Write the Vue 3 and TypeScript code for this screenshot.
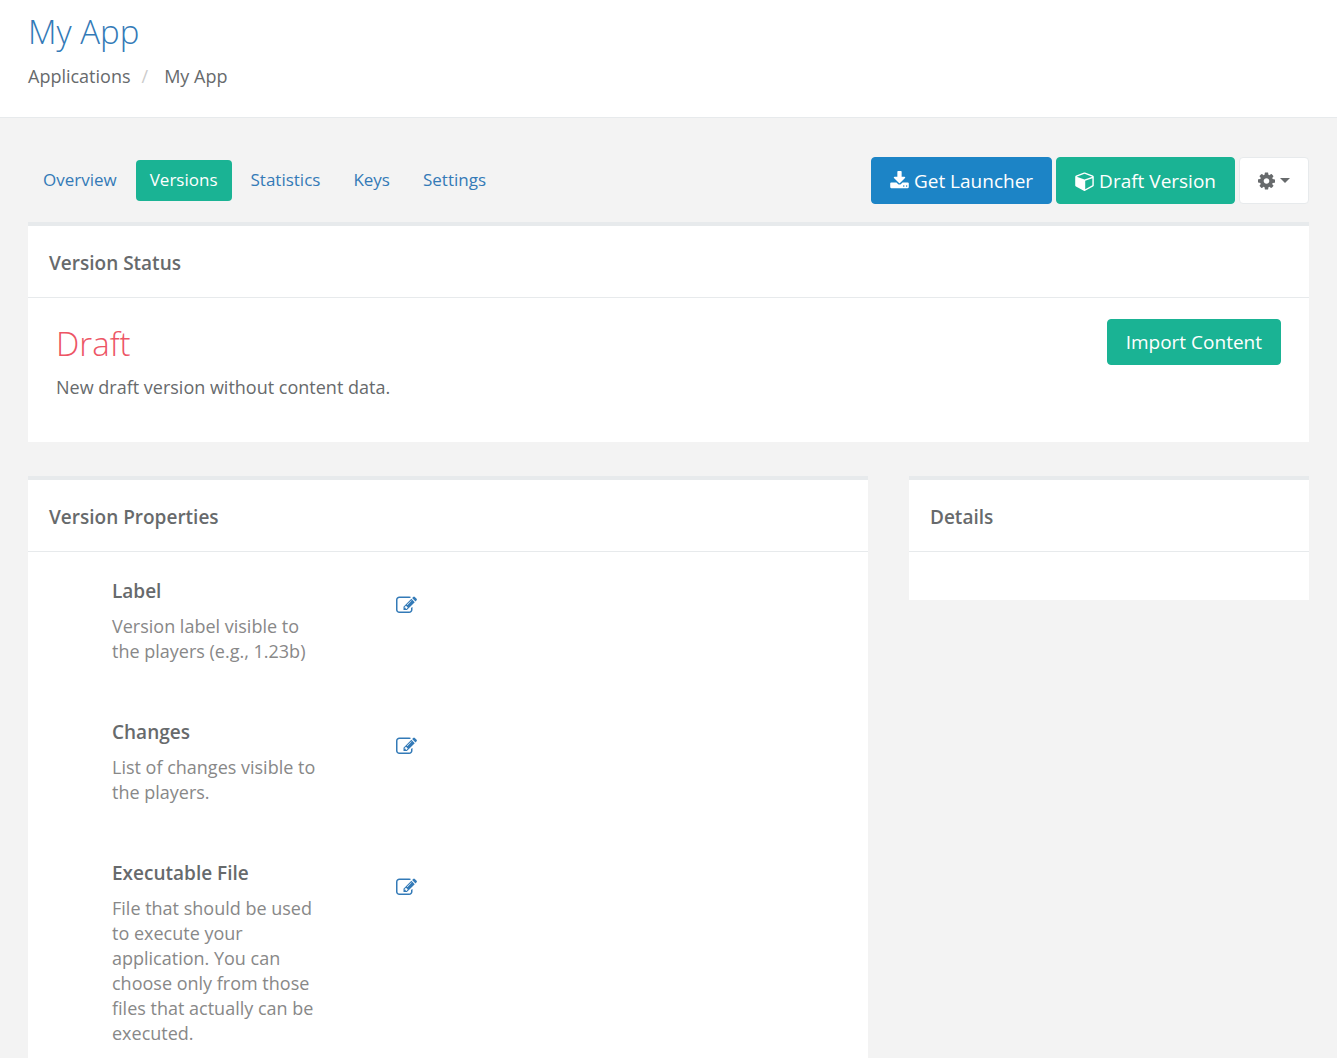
<script setup lang="ts">
interface Tab {
  label: string
  active?: boolean
}

interface Property {
  title: string
  description: string
}

const tabs: Tab[] = [
  { label: 'Overview' },
  { label: 'Versions', active: true },
  { label: 'Statistics' },
  { label: 'Keys' },
  { label: 'Settings' },
]

const properties: Property[] = [
  { title: 'Label', description: 'Version label visible to the players (e.g., 1.23b)' },
  { title: 'Changes', description: 'List of changes visible to the players.' },
  {
    title: 'Executable File',
    description:
      'File that should be used to execute your application. You can choose only from those files that actually can be executed.',
  },
]
</script>

<template>
  <div class="page">
    <header class="page-heading">
      <h2 class="title">My App</h2>
      <nav aria-label="Breadcrumb">
        <ol class="breadcrumb">
          <li><a href="#">Applications</a></li>
          <li><a href="#">My App</a></li>
        </ol>
      </nav>
    </header>

    <main class="content">
      <div class="toolbar">
        <nav class="tabs" aria-label="Application">
          <a v-for="tab in tabs" :key="tab.label" href="#" class="tab" :class="{ active: tab.active }">{{ tab.label }}</a>
        </nav>
        <div class="actions">
          <button type="button" class="btn btn-blue">
            <svg class="icon" viewBox="0 0 1664 1792" width="19" height="20" aria-hidden="true">
              <path d="M1280 1344q0-26-19-45t-45-19-45 19-19 45 19 45 45 19 45-19 19-45zm256 0q0-26-19-45t-45-19-45 19-19 45 19 45 45 19 45-19 19-45zm128-224v320q0 40-28 68t-68 28h-1472q-40 0-68-28t-28-68v-320q0-40 28-68t68-28h465l135 136q58 56 136 56t136-56l136-136h464q40 0 68 28t28 68zm-325-569q17 41-14 70l-448 448q-18 19-45 19t-45-19l-448-448q-31-29-14-70 17-39 59-39h256v-448q0-26 19-45t45-19h256q26 0 45 19t19 45v448h256q42 0 59 39z" />
            </svg>
            <span>Get Launcher</span>
          </button>
          <button type="button" class="btn btn-green">
            <svg class="icon" viewBox="0 0 1664 1792" width="19" height="20" aria-hidden="true">
              <path d="M896 1629l640-349v-636l-640 233v752zm-64-865l698-254-698-254-698 254zm832-252v768q0 35-18 65t-49 47l-704 384q-28 16-61 16t-61-16l-704-384q-31-17-49-47t-18-65v-768q0-40 23-73t61-47l704-256q22-8 44-8t44 8l704 256q38 14 61 47t23 73z" />
            </svg>
            <span>Draft Version</span>
          </button>
          <button type="button" class="btn btn-white" aria-label="Options">
            <svg class="icon" viewBox="128 0 1536 1792" width="17" height="20" aria-hidden="true">
              <path d="M1152 896q0-106-75-181t-181-75-181 75-75 181 75 181 181 75 181-75 75-181zm512-109v222q0 12-8 23t-20 13l-185 28q-19 54-39 91 35 50 107 138 10 12 10 25t-9 23q-27 37-99 108t-94 71q-12 0-26-9l-138-108q-44 23-91 38-16 136-29 186-7 28-36 28h-222q-14 0-24.5-8.5t-11.5-21.5l-28-184q-49-16-90-37l-141 107q-10 9-25 9-14 0-25-11-126-114-165-168-7-10-7-23 0-12 8-23 15-21 51-66.5t54-70.5q-27-50-41-99l-183-27q-13-2-21-12.5t-8-23.5v-222q0-12 8-23t19-13l186-28q14-46 39-92-40-57-107-138-10-12-10-24 0-10 9-23 26-36 98.5-107.5t94.5-71.5q13 0 26 10l138 107q44-23 91-38 16-136 29-186 7-28 36-28h222q14 0 24.5 8.5t11.5 21.5l28 184q49 16 90 37l142-107q9-9 24-9 13 0 25 10 129 119 165 170 7 8 7 22 0 12-8 23-15 21-51 66.5t-54 70.5q26 50 41 98l183 28q13 2 21 12.5t8 23.5z" />
            </svg>
            <span class="caret"></span>
          </button>
        </div>
      </div>

      <section class="panel">
        <h5 class="panel-title">Version Status</h5>
        <div class="status">
          <div>
            <h2 class="status-name">Draft</h2>
            <p class="status-text">New draft version without content data.</p>
          </div>
          <button type="button" class="btn btn-green">Import Content</button>
        </div>
      </section>

      <div class="columns">
        <section class="panel main-column">
          <h5 class="panel-title">Version Properties</h5>
          <div class="properties">
            <div v-for="property in properties" :key="property.title" class="property">
              <div>
                <h4 class="property-title">{{ property.title }}</h4>
                <p class="property-text">{{ property.description }}</p>
              </div>
              <a href="#" class="edit" :aria-label="`Edit ${property.title}`">
                <svg class="icon" viewBox="0 0 1792 1792" width="21" height="21" aria-hidden="true">
                  <path d="M888 1184l116-116-152-152-116 116v56h96v96h56zm440-720q-16-16-33 1l-350 350q-17 17-1 33t33-1l350-350q17-17 1-33zm80 594v190q0 119-84.5 203.5t-203.5 84.5h-832q-119 0-203.5-84.5t-84.5-203.5v-832q0-119 84.5-203.5t203.5-84.5h832q63 0 117 25 15 7 18 23 3 17-9 29l-49 49q-14 14-32 8-23-6-45-6h-832q-66 0-113 47t-47 113v832q0 66 47 113t113 47h832q66 0 113-47t47-113v-126q0-13 9-22l64-64q15-15 35-7t20 29zm-96-738l288 288-672 672h-288v-288zm444 132l-92 92-288-288 92-92q28-28 68-28t68 28l152 152q28 28 28 68t-28 68z" />
                </svg>
              </a>
            </div>
          </div>
        </section>
        <section class="panel side-column">
          <h5 class="panel-title">Details</h5>
          <div class="details"></div>
        </section>
      </div>
    </main>
  </div>
</template>

<style>
body {
  margin: 0;
  background: #f3f3f3;
}
</style>

<style scoped>
.page {
  color: #676a6c;
  font-family: "Open Sans", "Noto Sans", sans-serif;
  font-size: 18px;
  line-height: 26px;
}

h2,
h4,
h5,
p,
ol {
  margin: 0;
  padding: 0;
}

a {
  color: #337ab7;
  text-decoration: none;
}

.icon {
  display: block;
  flex: none;
  fill: currentColor;
}

.page-heading {
  padding: 12px 28px 28px;
  background: #fff;
  border-bottom: 1px solid #e7eaec;
}

.title {
  margin-bottom: 12px;
  color: #337ab7;
  font-size: 33px;
  font-weight: 300;
  line-height: 39px;
}

.breadcrumb {
  display: flex;
  list-style: none;
}

.breadcrumb a {
  color: inherit;
}

.breadcrumb li + li::before {
  content: "/";
  padding: 0 16px 0 11px;
  color: #ccc;
}

.content {
  padding: 39px 28px 56px;
}

.toolbar {
  display: flex;
  justify-content: space-between;
  align-items: center;
  margin-bottom: 18px;
}

.tabs {
  display: flex;
  gap: 5px;
  padding-left: 1px;
}

.tab {
  padding: 8px 14px 9px;
  border-radius: 4px;
  font-size: 17px;
  line-height: 24px;
}

.tab.active {
  color: #fff;
  background: #1ab394;
}

.actions {
  display: flex;
  gap: 4px;
  min-height: 47px;
}

.btn {
  display: flex;
  align-items: center;
  gap: 5px;
  min-height: 46px;
  padding: 0 18px;
  color: #fff;
  border: 1px solid;
  border-radius: 4px;
  font: inherit;
  font-size: 19px;
}

.btn-blue {
  background: #1c84c6;
  border-color: #1c84c6;
}

.btn-green {
  background: #1ab394;
  border-color: #1ab394;
}

.btn-white {
  color: #676a6c;
  background: #fff;
  border-color: #e7eaec;
}

.caret {
  border: 5px solid transparent;
  border-top-color: currentColor;
  border-bottom: 0;
}

.panel {
  background: #fff;
  border-top: 4px solid #e7eaec;
}

.panel-title {
  padding: 24px 21px 21px;
  border-bottom: 1px solid #e7eaec;
  font-size: 19px;
  font-weight: 600;
}

.status {
  display: flex;
  justify-content: space-between;
  align-items: flex-start;
  padding: 21px 28px 42px;
}

.status-name {
  margin-top: 5px;
  margin-bottom: 11px;
  color: #ed5565;
  font-size: 33px;
  font-weight: 300;
  line-height: 39px;
}

.columns {
  display: flex;
  align-items: flex-start;
  gap: 41px;
  margin-top: 34px;
}

.main-column {
  flex: 21 1 0;
}

.side-column {
  flex: 10 1 0;
}

.properties {
  padding: 26px 84px 0;
}

.property {
  display: grid;
  grid-template-columns: 212px 1fr;
  column-gap: 72px;
  align-items: start;
  padding-bottom: 55px;
}

.property-title {
  margin-bottom: 10px;
  font-size: 19px;
  font-weight: 600;
}

.property-text {
  color: #888;
  line-height: 25px;
}

.edit {
  justify-self: start;
  margin-top: 17px;
}

.details {
  height: 48px;
}
</style>
